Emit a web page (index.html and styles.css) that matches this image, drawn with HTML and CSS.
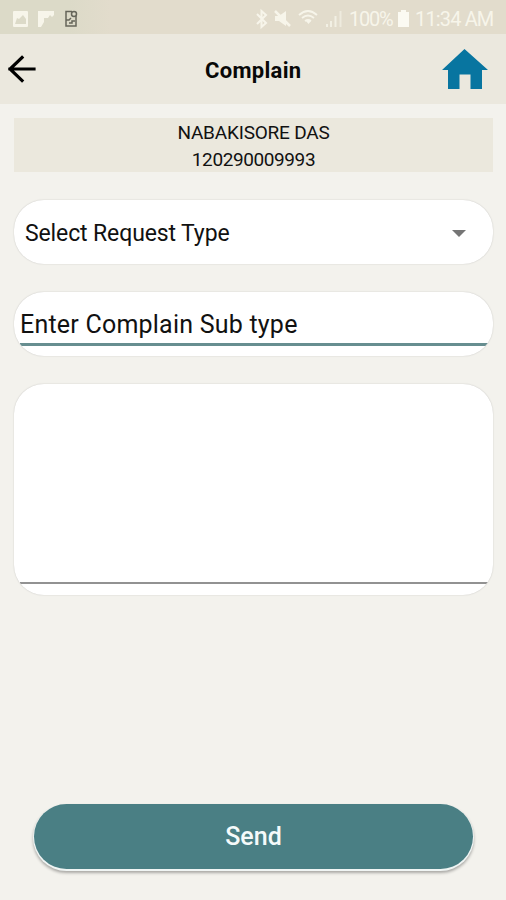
FILE: index.html
```html
<!DOCTYPE html>
<html lang="en">
<head>
<meta charset="utf-8">
<title>Complain</title>
<link rel="stylesheet" href="styles.css">
</head>
<body>
<div class="screen">
  <div class="status">
    <svg class="notices" width="80" height="34" viewBox="0 0 80 34">
      <path fill="#f7f5ea" fill-rule="evenodd" d="M14 11h13q1 0 1 1v14q0 1-1 1H14q-1 0-1-1V12q0-1 1-1zM15 24h11v-5l-3-4-4 4-2-1z"/>
      <path fill="#f7f5ea" d="M38 11h16v4l-2 2-2-2-2 3h-4v4l-3 5h-3z"/>
      <path fill="none" stroke="#65655a" stroke-width="1.5" d="M72 11.500H66V26h10V21M76 16v5M66 20h3l2-2M69 23h3v-2h3"/>
      <circle cx="74" cy="14" r="2.500" fill="none" stroke="#65655a" stroke-width="1.500"/>
    </svg>
    <svg class="signals" width="92" height="34" viewBox="253 0 92 34">
      <path fill="none" stroke="#f7f5ea" stroke-width="2" d="M257 14l9 9-4.500 4V11l4.500 4-9 9"/>
      <path fill="#f7f5ea" d="M275 16h4l7-5v15l-7-5h-4z"/>
      <path stroke="#f7f5ea" stroke-width="2.500" d="M275 11l15 15"/>
      <path fill="none" stroke="#f7f5ea" stroke-width="1.800" d="M299 15q9-8 18 0M302 18q6-5 12 0M305 21q3-2 6 0"/>
      <path fill="#f7f5ea" d="M306 21h5l-2.500 3z"/>
      <path stroke="#f7f5ea" stroke-width="2" d="M327 24v3M331 21v6M335.500 16v11" opacity=".8"/>
      <path stroke="#f7f5ea" stroke-width="2" d="M340.500 11v16" opacity=".6"/>
    </svg>
    <span class="percent">100%</span>
    <svg class="battery" width="11" height="17" viewBox="0 0 11 17"><path fill="#fbfaf2" d="M3 0h5v2h3v15H0V2h3z"/></svg>
    <span class="clock">11:34 AM</span>
  </div>
  <header class="bar">
    <svg class="back" width="28" height="28" viewBox="0 0 28 28"><path fill="none" stroke="#000" stroke-width="3.200" stroke-linecap="square" d="M26 14H2M14 2.500L2 14l12 11.500"/></svg>
    <h1 class="title">Complain</h1>
    <svg class="home" width="46" height="40" viewBox="0 0 46 40"><path fill="#0875a0" d="M22.500 0L46 21h-6v19H28.500V25.500h-11V40H6V21H0z"/></svg>
  </header>
  <main class="content">
    <div class="account">
      <div class="name">NABAKISORE DAS</div>
      <div class="number">120290009993</div>
    </div>
    <div class="card select">
      <span class="select-label">Select Request Type</span>
      <svg width="14" height="7" viewBox="0 0 14 7"><path fill="#757575" d="M0 0h14L7 7z"/></svg>
    </div>
    <div class="card subtype"><div class="input">Enter Complain Sub type</div></div>
    <div class="card message"><div class="area"></div></div>
    <button class="send">Send</button>
  </main>
</div>
</body>
</html>
```
FILE: styles.css
```css
* { box-sizing: border-box; }
body { margin: 0; font-family: Roboto, "Liberation Sans", sans-serif; color: #111; }
.screen { height: 900px; background: #f3f2ed; display: flex; flex-direction: column; overflow: hidden; }
.status { height: 34px; flex: none; display: flex; align-items: flex-start; background: linear-gradient(90deg, #dcdac8 0, #dcdac8 70px, #e2dccc 110px); color: #f7f5ea; font-size: 20px; line-height: 39px; white-space: nowrap; }
.signals { margin-left: 173px; }
.percent { width: 50px; padding-left: 4px; letter-spacing: -1.2px; }
.battery { margin: 10px 0 0 3px; }
.clock { margin-left: 6px; letter-spacing: -0.85px; }
.bar { height: 70px; flex: none; display: flex; align-items: center; padding: 0 18px 0 8px; background: #ebe8de; }
.title { margin: 3px 0 0 169px; font-size: 22px; font-weight: 700; line-height: 26px; color: #080808; letter-spacing: 0.3px; }
.home { margin-left: auto; }
.content { display: flex; flex-direction: column; padding: 14px 13px 0 14px; }
.account { height: 54px; background: #ebe8dd; text-align: center; font-size: 19px; line-height: 27px; padding-top: 1px; }
.name { height: 27px; letter-spacing: -0.2px; }
.number { height: 26px; letter-spacing: -0.4px; }
.card { background: #fff; border-radius: 30px; margin-top: 28px; height: 64px; box-shadow: 0 0 1.5px rgba(0,0,0,.22); overflow: hidden; }
.select { display: flex; align-items: center; justify-content: space-between; padding: 2px 27px 0 11px; font-size: 23px; letter-spacing: -0.12px; }
.input { height: 54px; border-bottom: 3px solid #678e90; margin: 0 5px 0 6px; padding-top: 18px; font-size: 25px; line-height: 30px; letter-spacing: 0.22px; white-space: nowrap; }
.message { height: 211px; }
.area { height: 200px; border-bottom: 2px solid #929292; margin: 0 5px 0 6px; }
.send { margin: 209px 20px 0; height: 65px; border: 0; border-radius: 33px; background: #4a7f84; color: #f5fafa; font: 500 25px/65px Roboto, "Liberation Sans", sans-serif; box-shadow: 0 1px 0 1px #f0f5f4, 0 3px 3px 1px rgba(0,0,0,.3); padding: 0; }
```
